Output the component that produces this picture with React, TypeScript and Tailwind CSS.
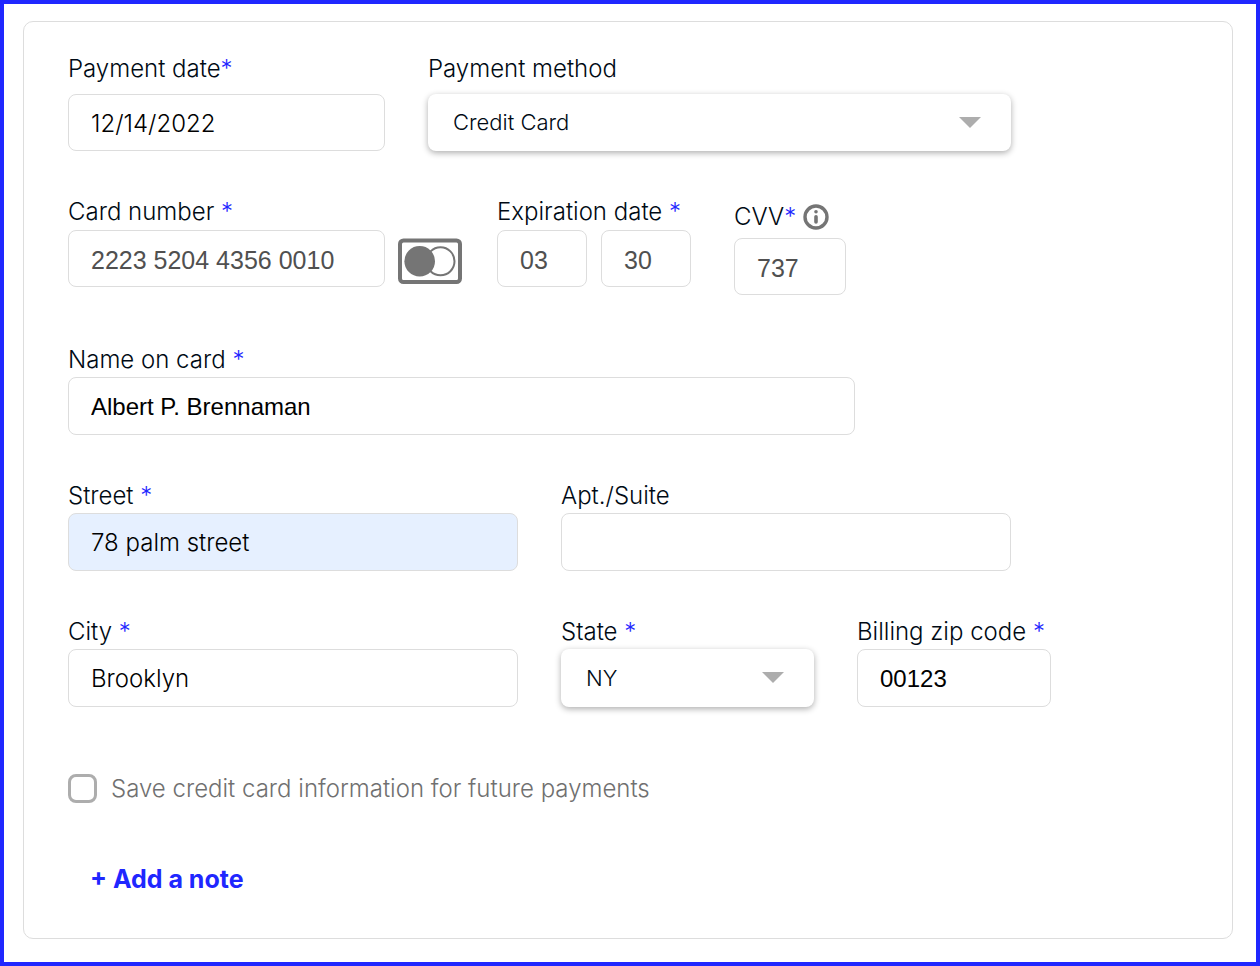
import { useState } from "react";
import type { ComponentProps, ReactNode } from "react";
import clsx from "clsx";

const STATES = ["CT", "NJ", "NY", "PA"];
const METHODS = ["Credit Card", "Bank Account", "Check"];

function Label({
  htmlFor,
  required,
  tight,
  children,
}: {
  htmlFor: string;
  required?: boolean;
  tight?: boolean;
  children: ReactNode;
}) {
  return (
    <label htmlFor={htmlFor} className="block text-2xl/7 font-[340] whitespace-nowrap text-[#000a14]">
      {children}
      {required && <span className="text-[#1f27ff]">{tight ? "*" : " *"}</span>}
    </label>
  );
}

function TextInput({ className, ...props }: ComponentProps<"input">) {
  return (
    <input
      type="text"
      className={clsx(
        "block max-w-full rounded-lg border border-[#dddddd] pl-[22px] outline-none focus:border-[#1f27ff]",
        className
      )}
      {...props}
    />
  );
}

function Select({
  options,
  className,
  ...props
}: ComponentProps<"select"> & { options: string[] }) {
  return (
    <div className={clsx("relative max-w-full", className)}>
      <select
        className="h-full w-full appearance-none rounded-lg bg-white pr-16 pl-[25px] text-[22px] font-[340] text-[#000a14] shadow-[0_2px_6px_rgba(0,0,0,0.32)] outline-none"
        {...props}
      >
        {options.map((o) => (
          <option key={o}>{o}</option>
        ))}
      </select>
      <svg
        aria-hidden
        viewBox="0 0 22 11"
        className="pointer-events-none absolute top-[23px] right-[30px] h-[11px] w-[22px]"
      >
        <path d="M0 0h22L11 11z" fill="#adadad" />
      </svg>
    </div>
  );
}

function CardBrandIcon() {
  return (
    <svg viewBox="0 0 64 46" className="mt-1 h-[46px] w-16 shrink-0" role="img" aria-label="Mastercard">
      <rect x="2" y="2.5" width="60" height="41.5" rx="3.5" fill="#fff" stroke="#757575" strokeWidth="4" />
      <circle cx="42.5" cy="23.3" r="14" fill="#fff" stroke="#757575" strokeWidth="2" />
      <circle cx="21.7" cy="23.3" r="15.3" fill="#757575" />
    </svg>
  );
}

function InfoIcon() {
  return (
    <svg viewBox="0 0 26 26" className="size-[26px]" aria-hidden>
      <circle cx="13" cy="13" r="11" fill="none" stroke="#757575" strokeWidth="3.4" />
      <circle cx="13" cy="7.8" r="1.8" fill="#757575" />
      <path d="M13 12.7v5.2" stroke="#757575" strokeWidth="3.6" strokeLinecap="round" />
    </svg>
  );
}

const INTER = "font-[Inter,sans-serif] text-2xl font-[340] text-black";
const ARIAL = "font-['Liberation_Sans',Arial,sans-serif]";
const MUTED = clsx(ARIAL, "h-[57px] pt-1 text-[25px] text-[#505050]");

export default function App() {
  const [saveCard, setSaveCard] = useState(false);

  return (
    <main className="min-h-screen border-4 border-[#1f27ff] bg-white pt-[17px] pr-[23px] pb-[23px] pl-[19px] font-[Inter,sans-serif]">
      <form className="rounded-[10px] border border-[#dddddd] px-11 pt-[33px] pb-[45px]">
        <div className="flex flex-wrap gap-x-[43px] gap-y-6">
          <div className="flex flex-col gap-[11px]">
            <Label htmlFor="date" required tight>
              Payment date
            </Label>
            <TextInput id="date" defaultValue="12/14/2022" className={clsx(INTER, "h-[57px] w-[317px] pt-0.5")} />
          </div>
          <div className="flex flex-col gap-[11px]">
            <Label htmlFor="method">Payment method</Label>
            <Select id="method" options={METHODS} className="h-[57px] w-[583px]" />
          </div>
        </div>

        <div className="mt-[47px] flex flex-wrap gap-y-6">
          <div className="mr-[35px] flex flex-col gap-1">
            <Label htmlFor="card" required>
              Card number
            </Label>
            <div className="flex items-center gap-[13px]">
              <TextInput id="card" defaultValue="2223 5204 4356 0010" className={clsx(MUTED, "w-[317px]")} />
              <CardBrandIcon />
            </div>
          </div>
          <div className="mr-[43px] flex flex-col gap-1">
            <Label htmlFor="month" required>
              Expiration date
            </Label>
            <div className="flex gap-[14px]">
              <TextInput id="month" defaultValue="03" className={clsx(MUTED, "w-[90px]")} />
              <TextInput
                id="year"
                aria-label="Expiration year"
                defaultValue="30"
                className={clsx(MUTED, "w-[90px]")}
              />
            </div>
          </div>
          <div className="flex flex-col gap-[7px] pt-[5px]">
            <div className="flex items-center gap-[7px]">
              <Label htmlFor="cvv" required tight>
                CVV
              </Label>
              <button type="button" aria-label="What is the CVV?">
                <InfoIcon />
              </button>
            </div>
            <TextInput id="cvv" defaultValue="737" className={clsx(MUTED, "w-28")} />
          </div>
        </div>

        <div className="mt-[51px] flex flex-col gap-[3px]">
          <Label htmlFor="name" required>
            Name on card
          </Label>
          <TextInput
            id="name"
            defaultValue="Albert P. Brennaman"
            className={clsx(ARIAL, "h-[58px] w-[787px] pt-0.5 text-2xl text-black")}
          />
        </div>

        <div className="mt-[47px] flex flex-wrap gap-x-[43px] gap-y-6">
          <div className="flex flex-col gap-[3px]">
            <Label htmlFor="street" required>
              Street
            </Label>
            <TextInput
              id="street"
              defaultValue="78 palm street"
              className={clsx(INTER, "h-[58px] w-[450px] bg-[#e6f0ff]")}
            />
          </div>
          <div className="flex flex-col gap-[3px]">
            <Label htmlFor="apt">Apt./Suite</Label>
            <TextInput id="apt" className={clsx(INTER, "h-[58px] w-[450px]")} />
          </div>
        </div>

        <div className="mt-[47px] flex flex-wrap gap-x-[43px] gap-y-6">
          <div className="flex flex-col gap-[3px]">
            <Label htmlFor="city" required>
              City
            </Label>
            <TextInput id="city" defaultValue="Brooklyn" className={clsx(INTER, "h-[58px] w-[450px]")} />
          </div>
          <div className="flex flex-col gap-[3px]">
            <Label htmlFor="state" required>
              State
            </Label>
            <Select id="state" options={STATES} defaultValue="NY" className="h-[58px] w-[253px]" />
          </div>
          <div className="flex flex-col gap-[3px]">
            <Label htmlFor="zip" required>
              Billing zip code
            </Label>
            <TextInput
              id="zip"
              defaultValue="00123"
              className={clsx(ARIAL, "h-[58px] w-[194px] pt-0.5 text-2xl text-black")}
            />
          </div>
        </div>

        <div className="mt-[67px] flex items-center gap-[14px]">
          <input
            id="save"
            type="checkbox"
            checked={saveCard}
            onChange={(e) => setSaveCard(e.target.checked)}
            className="size-[29px] shrink-0 appearance-none rounded-lg border-3 border-[#adadad] checked:bg-[#1f27ff]"
          />
          <label htmlFor="save" className="text-2xl/7 font-[340] text-[#707070]">
            Save credit card information for future payments
          </label>
        </div>

        <button type="button" className="mt-[62px] ml-[22px] block text-[25px]/7 font-bold text-[#1f27ff]">
          + Add a note
        </button>
      </form>
    </main>
  );
}
